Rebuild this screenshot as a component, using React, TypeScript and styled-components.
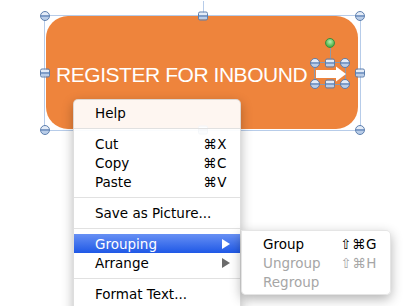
import styled, { createGlobalStyle } from "styled-components";

const GlobalStyle = createGlobalStyle`
  html, body {
    margin: 0;
    padding: 0;
    background: #ffffff;
  }
`;

const Page = styled.div`
  position: relative;
  width: 403px;
  height: 306px;
  overflow: hidden;
  background: #ffffff;
`;

const SelectionFrame = styled.div`
  position: absolute;
  left: 44px;
  top: 15px;
  width: 317px;
  height: 116px;
  box-sizing: border-box;
  border: 1px solid #b7cce9;
  padding: 0 2px 1px 1px;
  display: flex;
`;

const TopLine = styled.div`
  position: absolute;
  left: 50%;
  top: -15px;
  width: 1px;
  height: 15px;
  background: #b7cce9;
`;

const OrangeShape = styled.div`
  flex: 1;
  background: #ee843c;
  border-radius: 22px;
  display: flex;
  align-items: center;
  padding: 5px 0 0 10px;
`;

const Title = styled.span`
  font-family: "Liberation Sans", Arial, sans-serif;
  font-size: 21px;
  letter-spacing: -0.45px;
  color: #ffffff;
  white-space: nowrap;
`;

const ArrowBox = styled.div`
  position: relative;
  width: 32px;
  height: 23px;
  margin: -3px 0 0 7px;
  box-sizing: border-box;
  border: 1px solid #8d99ab;
`;

const ArrowSvg = styled.svg`
  position: absolute;
  left: 0;
  top: 0;
`;

const RotateStem = styled.div`
  position: absolute;
  left: 50%;
  top: -20px;
  width: 1px;
  height: 20px;
  background: #8d99ab;
`;

const Handle = styled.div<{ $x: number; $y: number; $square?: boolean; $green?: boolean }>`
  position: absolute;
  left: ${(p) => p.$x}%;
  top: ${(p) => p.$y}%;
  width: 8px;
  height: ${(p) => (p.$square ? 7 : 8)}px;
  transform: translate(-50%, -50%);
  border-radius: ${(p) => (p.$square ? "2px" : "50%")};
  border: 1px solid ${(p) => (p.$green ? "#3d8b3d" : "#5d7fae")};
  background: ${(p) =>
    p.$green
      ? "radial-gradient(circle at 50% 35%, #b9f0b0, #4fb34a 70%)"
      : "linear-gradient(#e4ecf7 0 42%, #7f9dc8 42% 58%, #b9cde8 58%)"};
  z-index: 2;
`;

const RotateHandle = styled(Handle)`
  top: -20px;
`;

const Menu = styled.div`
  position: absolute;
  left: 73px;
  top: 99px;
  width: 168px;
  height: 230px;
  box-sizing: border-box;
  padding-top: 3px;
  background: rgba(255, 255, 255, 0.93);
  border: 1px solid rgba(0, 0, 0, 0.13);
  border-radius: 5px 5px 0 0;
  box-shadow: 0 4px 12px rgba(0, 0, 0, 0.28);
  font-family: "DejaVu Sans", "Lucida Grande", sans-serif;
  font-size: 13.5px;
  z-index: 5;
`;

const SubMenu = styled.div`
  position: absolute;
  left: 241px;
  top: 230px;
  width: 150px;
  box-sizing: border-box;
  padding: 3px 0;
  background: rgba(255, 255, 255, 0.97);
  border: 1px solid rgba(0, 0, 0, 0.1);
  border-radius: 0 5px 5px 5px;
  box-shadow: 0 4px 12px rgba(0, 0, 0, 0.3);
  font-family: "DejaVu Sans", "Lucida Grande", sans-serif;
  font-size: 13.5px;
  z-index: 6;
`;

const Item = styled.div<{ $active?: boolean; $disabled?: boolean; $sub?: boolean }>`
  height: 19px;
  display: flex;
  align-items: center;
  justify-content: space-between;
  padding: 0 ${(p) => (p.$sub ? 10 : 13)}px 0 21px;
  color: ${(p) => (p.$active ? "#ffffff" : p.$disabled ? "#a6a6a6" : "#000000")};
  background: ${(p) => (p.$active ? "linear-gradient(#6790f4, #1f58e6)" : "transparent")};
  white-space: nowrap;
`;

const Shortcut = styled.span`
  letter-spacing: 0.5px;
`;

const Separator = styled.div`
  height: 12px;
  display: flex;
  align-items: center;
  &::after {
    content: "";
    flex: 1;
    height: 1px;
    background: #e1e1e1;
  }
`;

const SubArrow = styled.span<{ $active?: boolean }>`
  width: 0;
  height: 0;
  border-top: 5px solid transparent;
  border-bottom: 5px solid transparent;
  border-left: 8px solid ${(p) => (p.$active ? "#ffffff" : "#6b6b6b")};
`;

const corners: Array<[number, number, boolean]> = [
  [0, 0, false],
  [50, 0, true],
  [100, 0, false],
  [0, 50, true],
  [100, 50, true],
  [0, 100, false],
  [50, 100, true],
  [100, 100, false],
];

const App = () => {
  return (
    <Page>
      <GlobalStyle />
      <SelectionFrame>
        <TopLine />
        {corners.map(([x, y, sq]) => (
          <Handle key={`f${x}-${y}`} $x={x} $y={y} $square={sq} />
        ))}
        <OrangeShape>
          <Title>REGISTER FOR INBOUND</Title>
          <ArrowBox>
            <ArrowSvg width="32" height="23" viewBox="0 0 32 23">
              <rect x="1" y="7" width="22" height="8" fill="#ffffff" />
              <polygon points="21,3.5 31,11 21,18.5" fill="#ffffff" />
            </ArrowSvg>
            <RotateStem />
            <RotateHandle $x={50} $y={0} $green />
            {corners.map(([x, y, sq]) =>
              y !== 50 ? <Handle key={`a${x}-${y}`} $x={x} $y={y} $square={sq} /> : null
            )}
          </ArrowBox>
        </OrangeShape>
      </SelectionFrame>

      <Menu>
        <Item>Help</Item>
        <Separator />
        <Item>
          Cut<Shortcut>⌘X</Shortcut>
        </Item>
        <Item>
          Copy<Shortcut>⌘C</Shortcut>
        </Item>
        <Item>
          Paste<Shortcut>⌘V</Shortcut>
        </Item>
        <Separator />
        <Item>Save as Picture...</Item>
        <Separator />
        <Item $active $sub>
          Grouping
          <SubArrow $active />
        </Item>
        <Item $sub>
          Arrange
          <SubArrow />
        </Item>
        <Separator />
        <Item>Format Text...</Item>
      </Menu>

      <SubMenu>
        <Item>
          Group<Shortcut>⇧⌘G</Shortcut>
        </Item>
        <Item $disabled>
          Ungroup<Shortcut>⇧⌘H</Shortcut>
        </Item>
        <Item $disabled>Regroup</Item>
      </SubMenu>
    </Page>
  );
};

export default App;
